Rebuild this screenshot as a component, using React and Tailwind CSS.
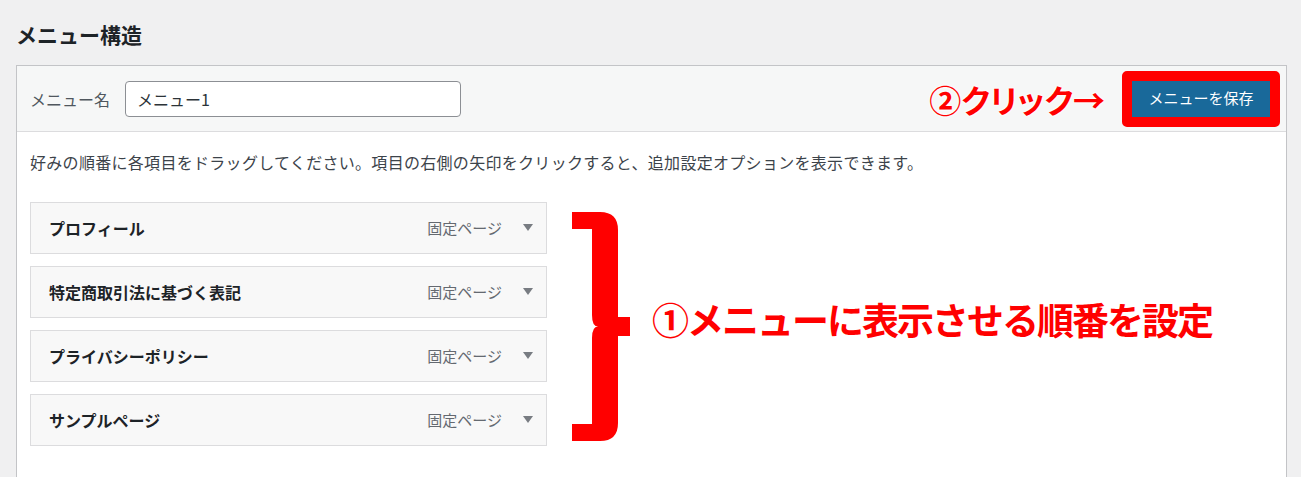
import React from 'react';

const items = ['プロフィール', '特定商取引法に基づく表記', 'プライバシーポリシー', 'サンプルページ'];

const Brace = () => (
  <svg width="58" height="229" viewBox="0 0 58 229" className="ml-[25px] mt-[10px] shrink-0">
    <path
      d="M0,0 H28 Q46,0 46,18 V105 H58 V124 H46 V211 Q46,229 28,229 H0 V212 H20 V126 Q20,114.5 26,114.5 Q20,114.5 20,103 V17 H0 Z"
      fill="#ff0000"
    />
  </svg>
);

const MenuItem = ({ title }) => (
  <div className="flex h-[52px] w-[517px] items-center border border-[#dcdcde] bg-[#f8f8f8] pl-[18px] pr-[13px]">
    <span className="text-[16px] font-bold text-[#1d2327]">{title}</span>
    <span className="ml-auto text-[15px] text-[#646970]">固定ページ</span>
    <svg width="10" height="8" viewBox="0 0 10 8" className="ml-[21px]">
      <polygon points="0,0 10,0 5,7" fill="#787c82" />
    </svg>
  </div>
);

export default function App() {
  return (
    <div className="h-[477px] w-[1301px] overflow-hidden bg-[#f0f0f1] font-['Noto_Sans_CJK_JP',sans-serif]">
      <h2 className="pl-4 pt-[20px] text-[21px] font-bold leading-[28px] text-[#1d2327]">メニュー構造</h2>

      <div className="ml-4 mt-[17px] h-[450px] w-[1271px] border border-[#c3c4c7] bg-white">
        {/* Header */}
        <div className="flex h-[66px] items-center border-b border-[#dcdcde] bg-[#f6f7f7] pl-[13px] pr-[6px]">
          <label className="text-[16px] text-[#50575e]">メニュー名</label>
          <div className="ml-[15px] flex h-[36px] w-[336px] items-center rounded-[4px] border border-[#8c8f94] bg-white px-[11px] text-[16px] text-[#2c3338]">
            メニュー1
          </div>
          <span className="ml-auto mr-[17px] text-[32px] font-bold leading-none text-[#ff0000] [font-feature-settings:'palt'] [text-shadow:0_0_3px_#fff,0_0_3px_#fff,0_0_2px_#fff]">
            ②クリック→
          </span>
          <div className="rounded-[5px] border-[10px] border-[#ff0000]">
            <button className="flex h-[36px] w-[138px] items-center justify-center bg-[#19699a] text-[15px] text-white">
              メニューを保存
            </button>
          </div>
        </div>

        {/* Body */}
        <div className="pl-[13px] pt-[19px]">
          <p className="text-[16px] leading-[22px] tracking-[0.3px] text-[#3c434a]">
            好みの順番に各項目をドラッグしてください。項目の右側の矢印をクリックすると、追加設定オプションを表示できます。
          </p>
          <div className="mt-[29px] flex items-start">
            <div className="flex flex-col gap-[12px]">
              {items.map((t) => (
                <MenuItem key={t} title={t} />
              ))}
            </div>
            <Brace />
            <span className="ml-[22px] mt-[97px] text-[37px] font-bold leading-[40px] tracking-[-2px] text-[#ff0000] [text-shadow:0_0_3px_#fff,0_0_2px_#fff]">
              ①メニューに表示させる順番を設定
            </span>
          </div>
        </div>
      </div>
    </div>
  );
}
